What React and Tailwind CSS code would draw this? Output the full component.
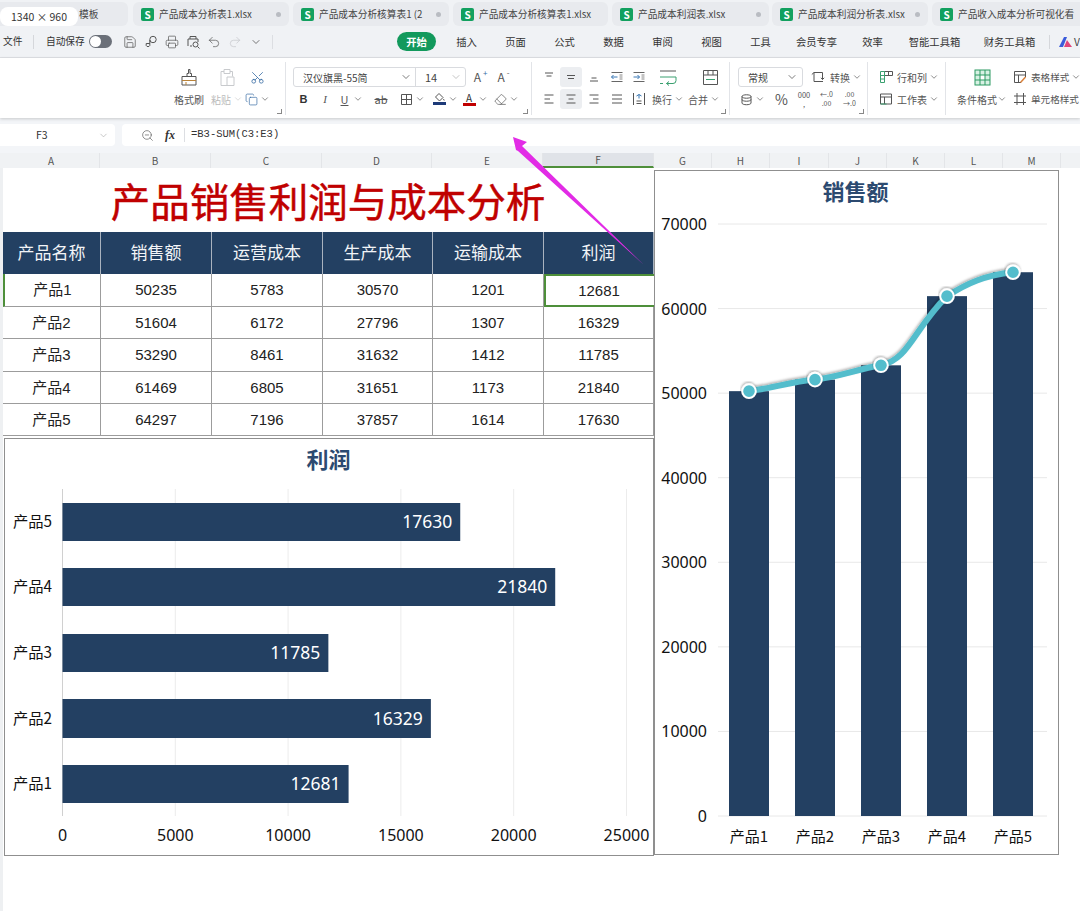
import React from 'react';
import { ChevronDown, Save, Printer, Undo2, Redo2, Scissors, Copy, Eraser, ZoomOut } from 'lucide-react';

const TABS = [
  { name: '产品成本分析表1.xlsx', w: 'w-[156px]', gap: 'ml-[5px]' },
  { name: '产品成本分析核算表1 (2', w: 'w-[156px]', gap: 'ml-[4px]' },
  { name: '产品成本分析核算表1.xlsx', w: 'w-[155px]', gap: 'ml-[4px]', noDot: true },
  { name: '产品成本利润表.xlsx', w: 'w-[157px]', gap: 'ml-[4px]' },
  { name: '产品成本利润分析表.xlsx', w: 'w-[156px]', gap: 'ml-[3px]' },
  { name: '产品收入成本分析可视化看', w: 'w-[160px]', gap: 'ml-[4px]', noDot: true },
];

const MENUS = [
  ['插入', 'w-[49px]'], ['页面', 'w-[49px]'], ['公式', 'w-[49px]'], ['数据', 'w-[49px]'], ['审阅', 'w-[49px]'],
  ['视图', 'w-[49px]'], ['工具', 'w-[49px]'], ['会员专享', 'w-[63px]'], ['效率', 'w-[49px]'],
  ['智能工具箱', 'w-[75px]'], ['财务工具箱', 'w-[75px]'],
];

const HEAD_COLS = [
  ['A', 'w-[97px]'], ['B', 'w-[111px]'], ['C', 'w-[111px]'], ['D', 'w-[110px]'], ['E', 'w-[111px]'], ['F', 'w-[111px]'],
  ['G', 'w-[58px]'], ['H', 'w-[58px]'], ['I', 'w-[59px]'], ['J', 'w-[58px]'], ['K', 'w-[58px]'], ['L', 'w-[58px]'], ['M', 'w-[58px]'],
];

const TABLE_HEAD = ['产品名称', '销售额', '运营成本', '生产成本', '运输成本', '利润'];
const TABLE_ROWS = [
  { h: 'h-[33px]', cells: ['产品1', 50235, 5783, 30570, 1201, 12681] },
  { h: 'h-[32px]', cells: ['产品2', 51604, 6172, 27796, 1307, 16329] },
  { h: 'h-[33px]', cells: ['产品3', 53290, 8461, 31632, 1412, 11785] },
  { h: 'h-[32px]', cells: ['产品4', 61469, 6805, 31651, 1173, 21840] },
  { h: 'h-[32px]', cells: ['产品5', 64297, 7196, 37857, 1614, 17630] },
];
const CELL_W = ['w-[98px]', 'w-[111px]', 'w-[111px]', 'w-[110px]', 'w-[111px]', 'w-[110px]'];

const NAVY = '#234062';
const TEAL = '#52bdcc';
const GREEN = '#3aa070';
const BLUE = '#3a78b5';

const Chev = ({ className = '' }) => <ChevronDown size={10} strokeWidth={1.6} className={`shrink-0 text-[#555] ${className}`} />;

const Ico = ({ s = 16, w, h, children, className = '' }) => (
  <svg width={w || s} height={h || s} viewBox={`0 0 ${w || s} ${h || s}`} fill="none" stroke="currentColor" strokeWidth="1" className={`shrink-0 ${className}`}>
    {children}
  </svg>
);

// lines for the alignment buttons, y values in a 14px box
const Lines = ({ rows, color }) => (
  <Ico s={14}>
    {rows.map(([x1, x2, y], i) => (
      <line key={i} x1={x1} x2={x2} y1={y} y2={y} stroke={color || 'currentColor'} />
    ))}
  </Ico>
);

const Indent = ({ flip }) => (
  <Ico s={14}>
    <path d="M1.5 2.5h11M1.5 11.5h11" stroke="#666" />
    <path d="M9.5 5h3M9.5 7h3M9.5 9h3" stroke="#888" />
    <path d={flip ? 'M1.5 7h6M5.5 5l2 2-2 2' : 'M7.5 7h-6M3.5 5l-2 2 2 2'} stroke={BLUE} />
  </Ico>
);

const Cell = ({ className = '', children }) => (
  <div className={`flex items-center justify-center shrink-0 h-full gap-[2px] whitespace-nowrap ${className}`}>{children}</div>
);

const Group = ({ className = '', launcher, children }) => (
  <div className={`relative h-[53px] shrink-0 flex flex-col gap-[2px] pt-[5px] border-r border-[#e2e4e8] ${className}`}>
    {children}
    {launcher && <span className="absolute right-[3px] bottom-[1px] w-[5px] h-[5px] border-r border-b border-[#888]" />}
  </div>
);

const Row = ({ className = '', children }) => <div className={`flex h-[20px] items-center ${className}`}>{children}</div>;

function TabBar() {
  return (
    <div className="h-[26px] flex items-end bg-[#f0f2f5] overflow-hidden">
      <div className="w-[128px] h-[24px] shrink-0 bg-[#e8eaee] rounded-r-[6px] flex items-center pl-[79px] text-[9.7px] text-[#444]">模板</div>
      {TABS.map((t) => (
        <div key={t.name} className={`${t.w} ${t.gap} h-[24px] shrink-0 bg-[#e8eaee] rounded-[6px] flex items-center pl-[8px] pr-[8px] gap-[5px]`}>
          <span className="w-[13px] h-[13px] shrink-0 rounded-[2px] bg-[#12a05f] text-white text-[10px] font-bold leading-[13px] text-center">S</span>
          <span className="text-[9.7px] text-[#444] whitespace-nowrap overflow-hidden flex-1">{t.name}</span>
          {!t.noDot && <span className="w-[5px] h-[5px] shrink-0 rounded-full bg-[#b9bcc2]" />}
        </div>
      ))}
    </div>
  );
}

function MenuBar() {
  return (
    <div className="h-[32px] flex items-center bg-[#f0f2f5] text-[10.3px] text-[#333] border-b border-[#dfe1e5]">
      <span className="ml-[3px] w-[20px] text-[9.7px] whitespace-nowrap">文件</span>
      <span className="ml-[10px] h-[14px] border-l border-[#d5d7db]" />
      <span className="ml-[12px] w-[40px] text-[9.7px] whitespace-nowrap">自动保存</span>
      <span className="ml-[3px] w-[23px] h-[13px] rounded-full bg-[#6b7079] flex items-center pl-[1px]">
        <span className="w-[11px] h-[11px] rounded-full bg-white" />
      </span>
      <div className="ml-[7px] flex items-center text-[#555]">
        <Cell className="w-[21px]"><Save size={14} strokeWidth={1.2} /></Cell>
        <Cell className="w-[21px]">
          <Ico s={14}><circle cx="9" cy="4.5" r="3.2" /><path d="M5.8 5v5.5a2 2 0 0 1-3.6 0V8.5h3.6" /></Ico>
        </Cell>
        <Cell className="w-[21px]"><Printer size={14} strokeWidth={1.2} /></Cell>
        <Cell className="w-[21px]">
          <Ico s={14}><path d="M4 4V1.5h6V4M2 11V4h10v3" /><path d="M4 11h2" /><circle cx="9.5" cy="9.5" r="2.5" /><path d="M11.5 11.5L13.5 13.5" /></Ico>
        </Cell>
        <Cell className="w-[21px]"><Undo2 size={14} strokeWidth={1.2} /></Cell>
        <Cell className="w-[21px] text-[#c4c6ca]"><Redo2 size={14} strokeWidth={1.2} /></Cell>
        <Cell className="w-[21px]"><ChevronDown size={12} strokeWidth={1.6} /></Cell>
      </div>
      <span className="ml-[6px] h-[14px] border-l border-[#dcdee2]" />
      <span className="ml-[124px] w-[39px] h-[19px] rounded-full bg-[#12995c] text-white font-bold flex items-center justify-center">开始</span>
      <div className="ml-[6px] flex items-center">
        {MENUS.map(([m, w]) => (
          <span key={m} className={`${w} text-center whitespace-nowrap shrink-0`}>{m}</span>
        ))}
      </div>
      <span className="ml-[2px] h-[14px] border-l border-[#d5d7db]" />
      <svg width="13" height="10" viewBox="0 0 13 10" className="ml-[9px] shrink-0">
        <path d="M0 10 L5 0 L8 0 L4 10 Z" fill="#3b5bdb" />
        <path d="M5 10 L8 3 L13 10 Z" fill="#e0457b" />
      </svg>
      <span className="ml-[2px] text-[#444]">V</span>
    </div>
  );
}

function Ribbon() {
  const labelCls = 'text-[10px] text-[#555] whitespace-nowrap';
  const tightLabel = 'text-[9.6px] text-[#555] whitespace-nowrap';
  return (
    <div className="h-[60px] flex items-start pt-[4px] bg-white shadow-[0_1px_3px_rgba(0,0,0,0.18)] relative overflow-hidden text-[#555]">
      <Group launcher className="w-[286px] pl-[174px]">
        <Row>
          <Cell className="w-[30px]">
            <Ico s={20}><path d="M3 9.5h14v8.5H3z" /><path d="M8 9.5V6.5h1.5V2.5h1.5v4H12.5v3" /><path d="M3 13.5h14M7 18v-3" stroke="#b9833a" /></Ico>
          </Cell>
          <Cell className="w-[30px] ml-[8px] text-[#c8cacd]">
            <Ico s={20}><path d="M4 4.5h3M13 4.5h2.5v5M4 4.5v14h6" /><path d="M7 2.5h6v4H7z" /><path d="M10 10h7v8.5h-7z" /></Ico>
          </Cell>
          <Cell className="w-[30px] text-[#3a6ea5]"><Scissors size={15} strokeWidth={1.3} className="rotate-[-90deg]" /></Cell>
        </Row>
        <Row>
          <Cell className={`w-[30px] ${labelCls}`}>格式刷</Cell>
          <Cell className="w-[30px] ml-[8px] text-[10px] text-[#bbb]">粘贴<ChevronDown size={10} strokeWidth={1.6} className="shrink-0 text-[#ccc]" /></Cell>
          <Cell className="w-[30px]"><Copy size={13} strokeWidth={1.3} className="text-[#3a6ea5]" /><Chev /></Cell>
        </Row>
      </Group>
      <Group launcher className="w-[246px] pl-[7px]">
        <Row>
          <div className="w-[173px] h-[20px] flex items-center rounded-[3px] border border-[#d9dbdf] text-[10px] text-[#444]">
            <span className="w-[122px] h-full flex items-center pl-[9px] border-r border-[#d9dbdf] whitespace-nowrap">
              <span className="flex-1">汉仪旗黑-55简</span><ChevronDown size={12} strokeWidth={1.4} className="mr-[3px]" />
            </span>
            <span className="flex-1 flex items-center pl-[9px] text-[11px]"><span className="flex-1">14</span><ChevronDown size={12} strokeWidth={1.4} className="mr-[3px] text-[#aaa]" /></span>
          </div>
          <Cell className="w-[23px] ml-[3px] text-[12px]">A<sup className="text-[#3a6ea5] text-[8px]">+</sup></Cell>
          <Cell className="w-[23px] text-[12px]">A<sup className="text-[8px]">-</sup></Cell>
        </Row>
        <Row>
          <Cell className="w-[21px] text-[11px] font-bold font-['Liberation_Sans'] text-[#333]">B</Cell>
          <Cell className="w-[22px] text-[11px] italic font-['Liberation_Serif']">I</Cell>
          <Cell className="w-[32px] text-[11px] underline">U<Chev className="ml-[3px]" /></Cell>
          <Cell className="w-[26px] text-[11px] line-through">ab</Cell>
          <Cell className="w-[36px]">
            <Ico s={13}><path d="M1.5 1.5h10v10h-10zM6.5 1.5v10M1.5 6.5h10" /></Ico><Chev />
          </Cell>
          <Cell className="w-[30px]">
            <span className="flex flex-col items-center">
              <Ico w={12} h={9}><path d="M6 .5l4 4-3.5 3.5-4-4z" /><path d="M10.5 6l.7 1.5" /></Ico>
              <span className="w-[13px] h-[3px] bg-[#1d3a78]" />
            </span>
            <Chev />
          </Cell>
          <Cell className="w-[30px]">
            <span className="flex flex-col items-center text-[10px] leading-[10px] text-[#333]">A<span className="w-[13px] h-[3px] bg-[#c00000]" /></span>
            <Chev />
          </Cell>
          <Cell className="w-[32px]"><Eraser size={13} strokeWidth={1.3} /><Chev /></Cell>
        </Row>
      </Group>
      <Group launcher className="w-[198px] pl-[6px]">
        <Row>
          <Cell className="w-[22px]"><Lines rows={[[3, 11, 3], [4.5, 9.5, 6]]} /></Cell>
          <Cell className="w-[22px] bg-[#eceef1] rounded-[3px]"><Lines rows={[[3, 11, 5.5], [4, 10, 8.5]]} /></Cell>
          <Cell className="w-[23px]"><Lines rows={[[4.5, 9.5, 8], [3, 11, 11]]} /></Cell>
          <Cell className="w-[23px]"><Indent /></Cell>
          <Cell className="w-[22px]"><Indent flip /></Cell>
          <Cell className="w-[30px] ml-[3px]">
            <Ico w={18} h={17}>
              <path d="M1 2h16" stroke="#555" />
              <path d="M1 8h16v3.5a3 3 0 0 1-3 3H7.5M10 12.5l-2.5 2 2.5 2" stroke={GREEN} />
              <path d="M1 14.5h3" stroke={GREEN} />
            </Ico>
          </Cell>
          <Cell className="w-[42px] ml-[6px]">
            <Ico w={17} h={17}><path d="M1.5 1.5h14v14h-14zM1.5 6h14M6 1.5V6M11 1.5V6" /><path d="M4 10.5h9" stroke={GREEN} /></Ico>
          </Cell>
        </Row>
        <Row>
          <Cell className="w-[22px]"><Lines rows={[[2.5, 11.5, 3], [2.5, 8, 7], [2.5, 11.5, 11]]} /></Cell>
          <Cell className="w-[22px] bg-[#eceef1] rounded-[3px]"><Lines rows={[[2.5, 11.5, 3], [4.5, 9.5, 7], [2.5, 11.5, 11]]} /></Cell>
          <Cell className="w-[23px]"><Lines rows={[[2.5, 11.5, 3], [6, 11.5, 7], [2.5, 11.5, 11]]} /></Cell>
          <Cell className="w-[23px]"><Lines rows={[[2, 12, 3], [2, 12, 7], [2, 12, 11]]} /></Cell>
          <Cell className="w-[22px]">
            <Ico s={14}><path d="M1.5 1v12M12.5 1v12" /><path d="M4.5 9h5M4.5 11.5h5" /><path d="M4.5 4L7 2.5 9.5 4M7 2.5v4" stroke={BLUE} /></Ico>
          </Cell>
          <Cell className={`w-[30px] ml-[3px] ${labelCls}`}>换行<Chev /></Cell>
          <Cell className={`w-[30px] ml-[6px] ${labelCls}`}>合并<Chev /></Cell>
        </Row>
      </Group>
      <Group launcher className="w-[138px] pl-[8px]">
        <Row>
          <div className="w-[65px] h-[20px] rounded-[3px] border border-[#d9dbdf] flex items-center pl-[9px] pr-[4px] text-[10px] text-[#444]">
            <span className="flex-1">常规</span><ChevronDown size={12} strokeWidth={1.4} />
          </div>
          <Cell className={`ml-[8px] ${labelCls}`}>
            <Ico s={14} className="mr-[3px]"><path d="M3 2.5v9h9M3 2.5h8.5v7" /><path d="M.8 4.5L3 2.5M10 7.8l1.5 1.7 1.7-1.7" /></Ico>
            转换<Chev />
          </Cell>
        </Row>
        <Row>
          <Cell className="w-[36px] ml-[-4px]">
            <Ico s={13}><path d="M2 3.5v6.5c0 2.3 9 2.3 9 0V3.5c0-2.3-9-2.3-9 0 0 2.3 9 2.3 9 0M2 6.5c0 2.3 9 2.3 9 0" /></Ico><Chev />
          </Cell>
          <Cell className="w-[23px] text-[14px]">%</Cell>
          <Cell className="w-[22px] text-[7.5px] leading-[9px] flex-col !gap-0"><span>000</span><span>,</span></Cell>
          <Cell className="w-[23px] text-[7px] leading-[9px] flex-col !gap-0"><span>←.0</span><span>.00</span></Cell>
          <Cell className="w-[23px] text-[7px] leading-[9px] flex-col !gap-0"><span>.00</span><span>→.0</span></Cell>
        </Row>
      </Group>
      <Group className="w-[78px] pl-[11px]">
        <Row className={labelCls}>
          <Ico s={14} className="mr-[4px]"><path d="M5.5 1.5h8v4h-8zM9.5 1.5v4" /><path d="M1.5 1.5h4v11h-4zM1.5 5.5h4M1.5 9h4" stroke={GREEN} /></Ico>
          行和列<Chev className="ml-[2px]" />
        </Row>
        <Row className={labelCls}>
          <Ico s={14} className="mr-[4px]"><path d="M1.5 2h11v10h-11zM1.5 5h11M5.5 5v7" /><path d="M1.5 12h6" stroke={GREEN} /></Ico>
          工作表<Chev className="ml-[2px]" />
        </Row>
      </Group>
      <div className="h-[53px] flex flex-1 pt-[5px] pl-[11px] gap-[6px]">
        <div className="flex flex-col gap-[2px] w-[50px] shrink-0">
          <Row className="justify-center">
            <svg width="17" height="17" viewBox="0 0 17 17" fill="none" stroke="#2d9a63" className="shrink-0">
              <rect x="1" y="1" width="15" height="15" fill="#d8f1e4" />
              <rect x="6" y="6" width="5" height="5" fill="#fff" stroke="none" />
              <path d="M1 6h15M1 11h15M6 1v15M11 1v15" />
            </svg>
          </Row>
          <Row className={`${labelCls} justify-center`}>条件格式<Chev /></Row>
        </div>
        <div className="flex flex-col gap-[2px]">
          <Row className={tightLabel}>
            <Ico s={14} className="mr-[4px]"><path d="M8 12.5H1.5v-11h11V7M1.5 5h11M5.5 5v7.5" /><path d="M7.5 12.5l5-5.5" stroke="#d9803a" strokeWidth="1.5" /></Ico>
            表格样式<Chev className="ml-[2px]" />
          </Row>
          <Row className={tightLabel}>
            <Ico s={14} className="mr-[4px]"><path d="M4 1v12M10.5 1v12M1 4h12M1 10.5h12" /></Ico>
            单元格样式
          </Row>
        </div>
      </div>
    </div>
  );
}

function FormulaBar() {
  return (
    <div className="h-[35px] bg-[#f3f5f8] flex items-start pt-[6px] gap-[7px]">
      <div className="w-[115px] h-[22px] shrink-0 bg-white rounded-r-[4px] flex items-center text-[10.5px] text-[#333] pl-[36px] pr-[6px]">
        <span className="flex-1">F3</span><ChevronDown size={11} strokeWidth={1.4} className="text-[#aaa]" />
      </div>
      <div className="flex-1 h-[22px] bg-white rounded-l-[4px] flex items-center">
        <ZoomOut size={13} strokeWidth={1.2} className="ml-[19px] text-[#555]" />
        <span className="ml-[11px] text-[12px] font-bold italic font-['Liberation_Serif'] text-[#333]">fx</span>
        <span className="ml-[9px] h-[14px] border-l border-[#dcdee2]" />
        <span className="ml-[6px] text-[10.5px] text-[#333] font-['Liberation_Mono']">=B3-SUM(C3:E3)</span>
      </div>
    </div>
  );
}

function ColumnHeads() {
  return (
    <div className="h-[15px] flex bg-[#f0f2f4] pl-[3px] text-[10px] text-[#555]">
      {HEAD_COLS.map(([c, w]) => (
        <span key={c} className={`${w} shrink-0 h-full flex items-center justify-center border-r border-[#e3e5e8] ${c === 'F' ? 'bg-[#e0e3e8] border-b-2 border-b-[#4e8f3a]' : ''}`}>{c}</span>
      ))}
    </div>
  );
}

function DataTable() {
  return (
    <div className="font-['Liberation_Sans','Noto_Sans_CJK_SC',sans-serif]">
      <div className="flex h-[42px]">
        {TABLE_HEAD.map((h, i) => (
          <div key={h} className={`${CELL_W[i]} shrink-0 flex items-center justify-center pt-[1px] text-[17px] text-[#f2f4f7] bg-[#234062] border-r border-[#a9b3bf]`}>{h}</div>
        ))}
      </div>
      {TABLE_ROWS.map((r, ri) => (
        <div key={ri} className={`flex ${r.h}`}>
          {r.cells.map((c, i) => {
            const selected = ri === 0 && i === 5;
            const rowMark = ri === 0 && i === 0;
            return (
              <div
                key={i}
                className={`${CELL_W[i]} shrink-0 flex items-center justify-center pt-[1px] text-[15px] text-[#222] ${
                  selected
                    ? 'border-2 border-r-0 border-[#4e8f3a] pr-[2px]'
                    : `border-r border-b border-[#9c9c9c] ${rowMark ? 'border-l-2 border-l-[#4e8f3a]' : ''}`
                }`}
              >
                {c}
              </div>
            );
          })}
        </div>
      ))}
    </div>
  );
}

function ProfitChart() {
  const rows = [
    { name: '产品5', v: 17630, y: 503, h: 38 },
    { name: '产品4', v: 21840, y: 568, h: 38 },
    { name: '产品3', v: 11785, y: 634, h: 38 },
    { name: '产品2', v: 16329, y: 699, h: 39 },
    { name: '产品1', v: 12681, y: 765, h: 38 },
  ];
  const x0 = 57.5;
  const sc = 564 / 25000;
  // svg y = page y - 439
  return (
    <div className="ml-[1px] mt-[2px] w-[650px] h-[418px] border border-[#8f8f8f] bg-white flex flex-col">
      <div className="h-[41px] shrink-0 flex items-center justify-center pr-[1px] pb-[2px] text-[22px] font-bold text-[#2c4a70]">利润</div>
      <svg width="648" height="375" viewBox="0 41 648 375" className="block">
        {[0, 5000, 10000, 15000, 20000, 25000].map((t) => (
          <g key={t}>
            <line x1={x0 + t * sc} x2={x0 + t * sc} y1="50" y2="377" stroke={t === 0 ? '#d0d0d0' : '#ececec'} />
            <text x={x0 + t * sc} y="402" textAnchor="middle" fontSize="16" fill="#111" fontFamily="Noto Sans">{t}</text>
          </g>
        ))}
        {rows.map((r) => (
          <g key={r.name}>
            <rect x={x0} y={r.y - 439} width={r.v * sc} height={r.h} fill={NAVY} />
            <text x={x0 + r.v * sc - 8} y={r.y - 439 + r.h / 2 + 6} textAnchor="end" fontSize="17.5" fill="#fff" fontFamily="Noto Sans">{r.v}</text>
            <text x="47" y={r.y - 439 + r.h / 2 + 5} textAnchor="end" fontSize="15.3" fill="#111" fontFamily="Noto Sans CJK SC">{r.name}</text>
          </g>
        ))}
      </svg>
    </div>
  );
}

function SalesChart() {
  const data = [50235, 51604, 53290, 61469, 64297];
  const baseY = 645;
  const sc = 592 / 70000;
  const cx = [94, 160, 226, 292, 358];
  const yOf = (v) => baseY - v * sc;
  const pts = data.map((v, i) => [cx[i], yOf(v)]);
  const curve =
    `M${pts[0][0]} ${pts[0][1]} C${pts[0][0] + 22} ${pts[0][1] - 3} ${pts[1][0] - 22} ${pts[1][1] + 2} ${pts[1][0]} ${pts[1][1]}` +
    ` C${pts[1][0] + 22} ${pts[1][1] - 2} ${pts[2][0] - 24} ${pts[2][1] + 4} ${pts[2][0]} ${pts[2][1]}` +
    ` C${pts[2][0] + 28} ${pts[2][1] - 6} ${pts[3][0] - 34} ${pts[3][1] + 34} ${pts[3][0]} ${pts[3][1]}` +
    ` C${pts[3][0] + 20} ${pts[3][1] - 13} ${pts[4][0] - 28} ${pts[4][1] + 3} ${pts[4][0]} ${pts[4][1]}`;
  return (
    <div className="mt-[2px] w-[405px] h-[685px] shrink-0 border border-[#8f8f8f] bg-white flex flex-col">
      <div className="h-[41px] shrink-0 flex items-center justify-center pr-[2px] pb-[2px] text-[22px] font-bold text-[#2c4a70]">销售额</div>
      <svg width="403" height="642" viewBox="0 41 403 642" className="block">
        <defs>
          <filter id="ls" x="-10%" y="-20%" width="120%" height="140%">
            <feDropShadow dx="-0.5" dy="-1.5" stdDeviation="1" floodColor="#000" floodOpacity="0.3" />
          </filter>
        </defs>
        {[0, 10000, 20000, 30000, 40000, 50000, 60000, 70000].map((t) => (
          <g key={t}>
            <line x1="63" x2="392" y1={yOf(t)} y2={yOf(t)} stroke="#e8e8e8" />
            <text x="52" y={yOf(t) + 6} textAnchor="end" fontSize="16" fill="#111" fontFamily="Noto Sans">{t}</text>
          </g>
        ))}
        {data.map((v, i) => (
          <rect key={v} x={cx[i] - 20} y={yOf(v)} width="40" height={v * sc} fill={NAVY} />
        ))}
        <path d={curve} fill="none" stroke={TEAL} strokeWidth="6" strokeLinecap="round" filter="url(#ls)" />
        {pts.map(([x, y]) => (
          <circle key={x} cx={x} cy={y} r="6.8" fill={TEAL} stroke="#fff" strokeWidth="2" filter="url(#ls)" />
        ))}
        {data.map((v, i) => (
          <text key={i} x={cx[i]} y="671" textAnchor="middle" fontSize="15" fill="#111" fontFamily="Noto Sans CJK SC">{`产品${i + 1}`}</text>
        ))}
      </svg>
    </div>
  );
}

export default function App() {
  return (
    <div className="relative w-[1080px] h-[911px] overflow-hidden bg-white font-['Noto_Sans_CJK_SC','Noto_Sans',sans-serif]">
      <TabBar />
      <MenuBar />
      <Ribbon />
      <FormulaBar />
      <ColumnHeads />
      <div className="flex h-[743px]">
        <div className="w-[654px] shrink-0 flex">
          <div className="w-[3px] shrink-0 bg-[#eef0f2]" />
          <div className="w-[651px] shrink-0">
            <div className="h-[64px] flex items-center justify-center pr-[1px] text-[39.5px] leading-none [-webkit-text-stroke:0.5px_#c00000] text-[#c00000]">产品销售利润与成本分析</div>
            <DataTable />
            <ProfitChart />
          </div>
        </div>
        <SalesChart />
      </div>
      {/* size badge from the screenshot tool */}
      <div className="absolute left-0 top-[7px] w-[78px] h-[19px] rounded-[8px] bg-white flex items-center justify-center text-[10.5px] text-[#333]">1340 × 960</div>
      {/* annotation arrow */}
      <svg className="absolute inset-0 pointer-events-none" width="1080" height="911">
        <path d="M513 137 L527 142 L522 146 L644 265 L518 151 L516 150 Z" fill="#e22be6" />
      </svg>
    </div>
  );
}
